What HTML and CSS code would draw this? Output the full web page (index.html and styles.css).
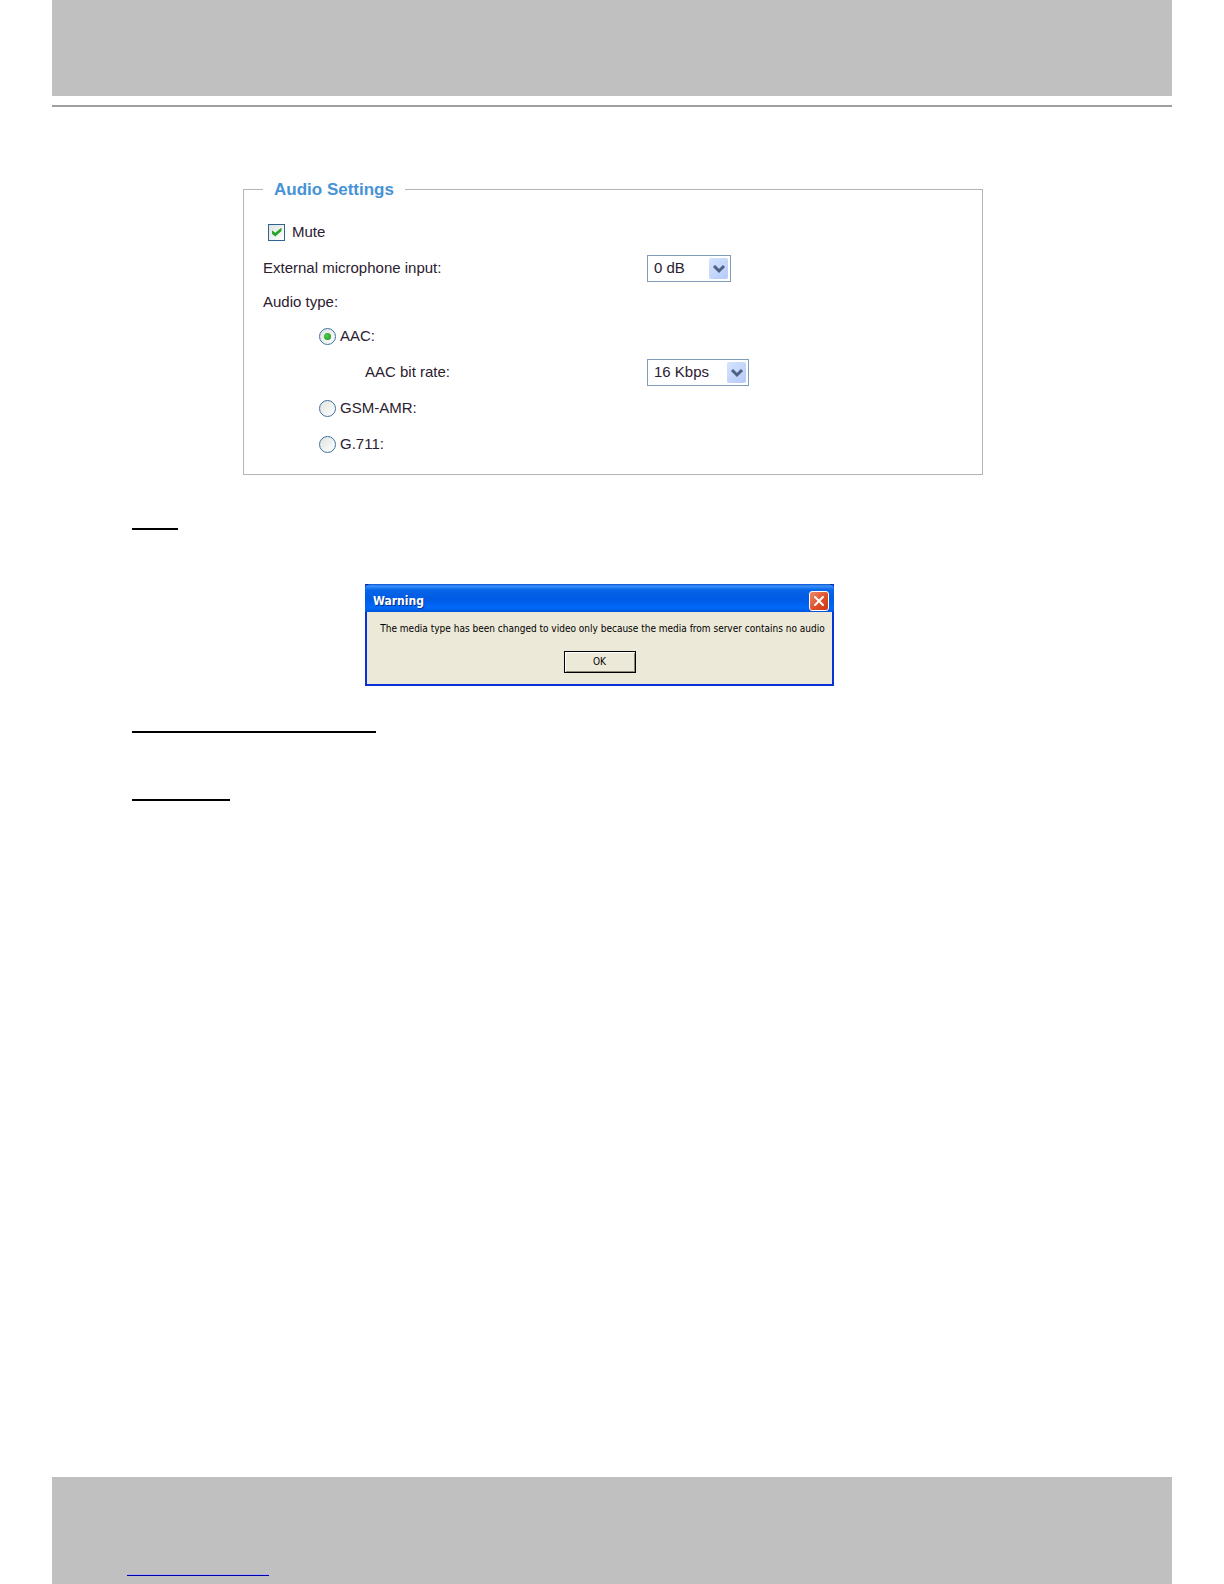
FILE: index.html
```html
<!DOCTYPE html>
<html lang="en">
<head>
<meta charset="utf-8">
<meta name="viewport" content="width=device-width, initial-scale=1">
<title>Audio Settings</title>
<link rel="stylesheet" href="styles.css">
</head>
<body>
<div class="page">
  <header class="page-header"></header>
  <main class="content">
    <form class="settings">
      <fieldset class="panel">
        <legend class="panel-title">Audio Settings</legend>
        <div class="row row-check">
          <input class="check" type="checkbox" id="mute" checked>
          <label for="mute">Mute</label>
        </div>
        <div class="row">
          <label class="field-label" for="mic">External microphone input:</label>
          <span class="select">
            <select id="mic"><option>0 dB</option></select>
            <svg class="arrow" viewBox="0 0 19 21" aria-hidden="true"><path d="M5 8l5 5 5-5"/></svg>
          </span>
        </div>
        <div class="row row-short">Audio type:</div>
        <div class="row row-radio">
          <input class="radio" type="radio" name="type" id="aac" checked>
          <label for="aac">AAC:</label>
        </div>
        <div class="row">
          <label class="field-label field-nested" for="rate">AAC bit rate:</label>
          <span class="select select-wide">
            <select id="rate"><option>16 Kbps</option></select>
            <svg class="arrow" viewBox="0 0 19 21" aria-hidden="true"><path d="M5 8l5 5 5-5"/></svg>
          </span>
        </div>
        <div class="row row-radio">
          <input class="radio" type="radio" name="type" id="gsm">
          <label for="gsm">GSM-AMR:</label>
        </div>
        <div class="row row-radio">
          <input class="radio" type="radio" name="type" id="g711">
          <label for="g711">G.711:</label>
        </div>
      </fieldset>
    </form>
    <div class="rule rule-small"></div>
    <section class="dialog" role="dialog" aria-labelledby="dialog-title">
      <div class="title-bar">
        <h2 class="dialog-title" id="dialog-title">Warning</h2>
        <button class="close" type="button">
          <svg viewBox="0 0 18 18" aria-hidden="true"><path d="M5 5l8 8M13 5l-8 8"/></svg>
        </button>
      </div>
      <div class="dialog-body">
        <p class="message">The media type has been changed to video only because the media from server contains no audio</p>
        <button class="ok" type="button">OK</button>
      </div>
    </section>
    <div class="rule rule-large"></div>
    <div class="rule rule-medium"></div>
  </main>
  <footer class="page-footer"><div class="footer-rule"></div></footer>
</div>
</body>
</html>
```
FILE: styles.css
```css
* { box-sizing: border-box; }

body {
  margin: 0;
  background: #fff;
  color: #2b2030;
  font: 15px/20px "Liberation Sans", Arial, sans-serif;
}

.page {
  display: flex;
  flex-direction: column;
  min-height: 100vh;
  padding: 0 52px;
}

.page-header {
  height: 107px;
  border-bottom: 2px solid #a0a0a0;
  background: linear-gradient(#c0c0c0 96px, #fff 96px);
}

.content {
  flex: 1;
  padding: 71px 78px 0 80px;
}

.settings {
  max-width: 740px;
  margin: 0 auto;
}

.panel {
  min-width: 0;
  margin: 0;
  padding: 14px 19px 12px;
  border: 1px solid #b4b4b4;
}

.panel-title {
  padding: 2px 11px 0;
  color: #4593d6;
  font-size: 17px;
  font-weight: bold;
}

.row {
  display: flex;
  align-items: center;
  height: 36px;
}

.row-short { height: 32px; }
.row-check { gap: 7px; padding-left: 5px; }
.row-radio { gap: 4px; padding-left: 56px; }

.field-label { flex: 0 0 384px; }
.field-nested { padding-left: 102px; }

.check,
.radio {
  appearance: none;
  display: grid;
  place-items: center;
  width: 17px;
  height: 17px;
  margin: 0;
}

.check {
  border: 1px solid #2f6390;
  background: linear-gradient(135deg, #dfe3df, #fff);
}

.check:checked::before {
  content: "";
  width: 10px;
  height: 9px;
  background: #27a52b;
  clip-path: polygon(0 28%, 38% 58%, 100% 0, 100% 38%, 38% 100%, 0 66%);
}

.radio {
  border: 1px solid #41719d;
  border-radius: 50%;
  background: linear-gradient(135deg, #dfe3df, #fff);
}

.radio:checked::before {
  content: "";
  width: 7px;
  height: 7px;
  border-radius: 50%;
  background: radial-gradient(circle at 40% 40%, #50ce50, #189018);
}

.select {
  position: relative;
  width: 84px;
  height: 27px;
}

.select-wide { width: 102px; }

.select select {
  appearance: none;
  width: 100%;
  height: 100%;
  padding: 0 24px 0 6px;
  border: 1px solid #7f9db9;
  border-radius: 0;
  background: #fff;
  color: inherit;
  font: inherit;
}

.arrow {
  position: absolute;
  top: 3px;
  right: 3px;
  width: 19px;
  height: 21px;
  border-radius: 2px;
  background: linear-gradient(135deg, #d6e3ff, #b4caf8);
  pointer-events: none;
}

.arrow path {
  fill: none;
  stroke: #4d6185;
  stroke-width: 3;
}

.rule {
  height: 2px;
  background: #000;
}

.rule-small { width: 46px; margin-top: 53px; }
.rule-large { width: 244px; margin-top: 45px; }
.rule-medium { width: 98px; margin-top: 66px; }

.dialog {
  max-width: 469px;
  margin: 54px auto 0 233px;
  border: solid #0831d9;
  border-width: 0 2px 2px;
  background: #000;
  color: #000;
  font: 10px/16px "DejaVu Sans Condensed", "DejaVu Sans", sans-serif;
}

.title-bar {
  display: flex;
  align-items: center;
  justify-content: space-between;
  height: 28px;
  margin: 0 -2px;
  padding: 5px 5px 0 8px;
  border-radius: 5px 5px 0 0;
  background: linear-gradient(#0b51cf, #3a92fb 2px, #0665e8 6px, #005be4 15px, #0069fa 24px, #0053d8);
}

.dialog-title {
  margin: 0;
  color: #fff;
  font-size: 12px;
  text-shadow: 1px 1px #0b2f86;
}

.close {
  width: 20px;
  height: 20px;
  padding: 0;
  border: 1px solid #fff;
  border-radius: 3px;
  background: linear-gradient(135deg, #ee8b6c, #dc4b25 60%, #c93c16);
}

.close svg {
  display: block;
  width: 18px;
  height: 18px;
}

.close path {
  fill: none;
  stroke: #fff;
  stroke-width: 2;
  stroke-linecap: round;
}

.dialog-body {
  display: flex;
  flex-direction: column;
  align-items: center;
  gap: 14px;
  padding: 9px 0 11px;
  background: #ece9d8;
}

.message {
  margin: 0;
  padding-left: 6px;
}

.ok {
  width: 72px;
  height: 22px;
  padding: 0;
  border: 1px solid #000;
  background: #ece9d8;
  box-shadow: inset 1px 1px #fff, inset -1px -1px #8a8877;
  color: inherit;
  font: inherit;
}

.page-footer {
  height: 107px;
  padding: 97px 75px 0;
  background: #c0c0c0;
}

.footer-rule {
  width: 142px;
  height: 2px;
  border-top: 1px solid #b0b0f4;
  background: #0000a8;
}
```
